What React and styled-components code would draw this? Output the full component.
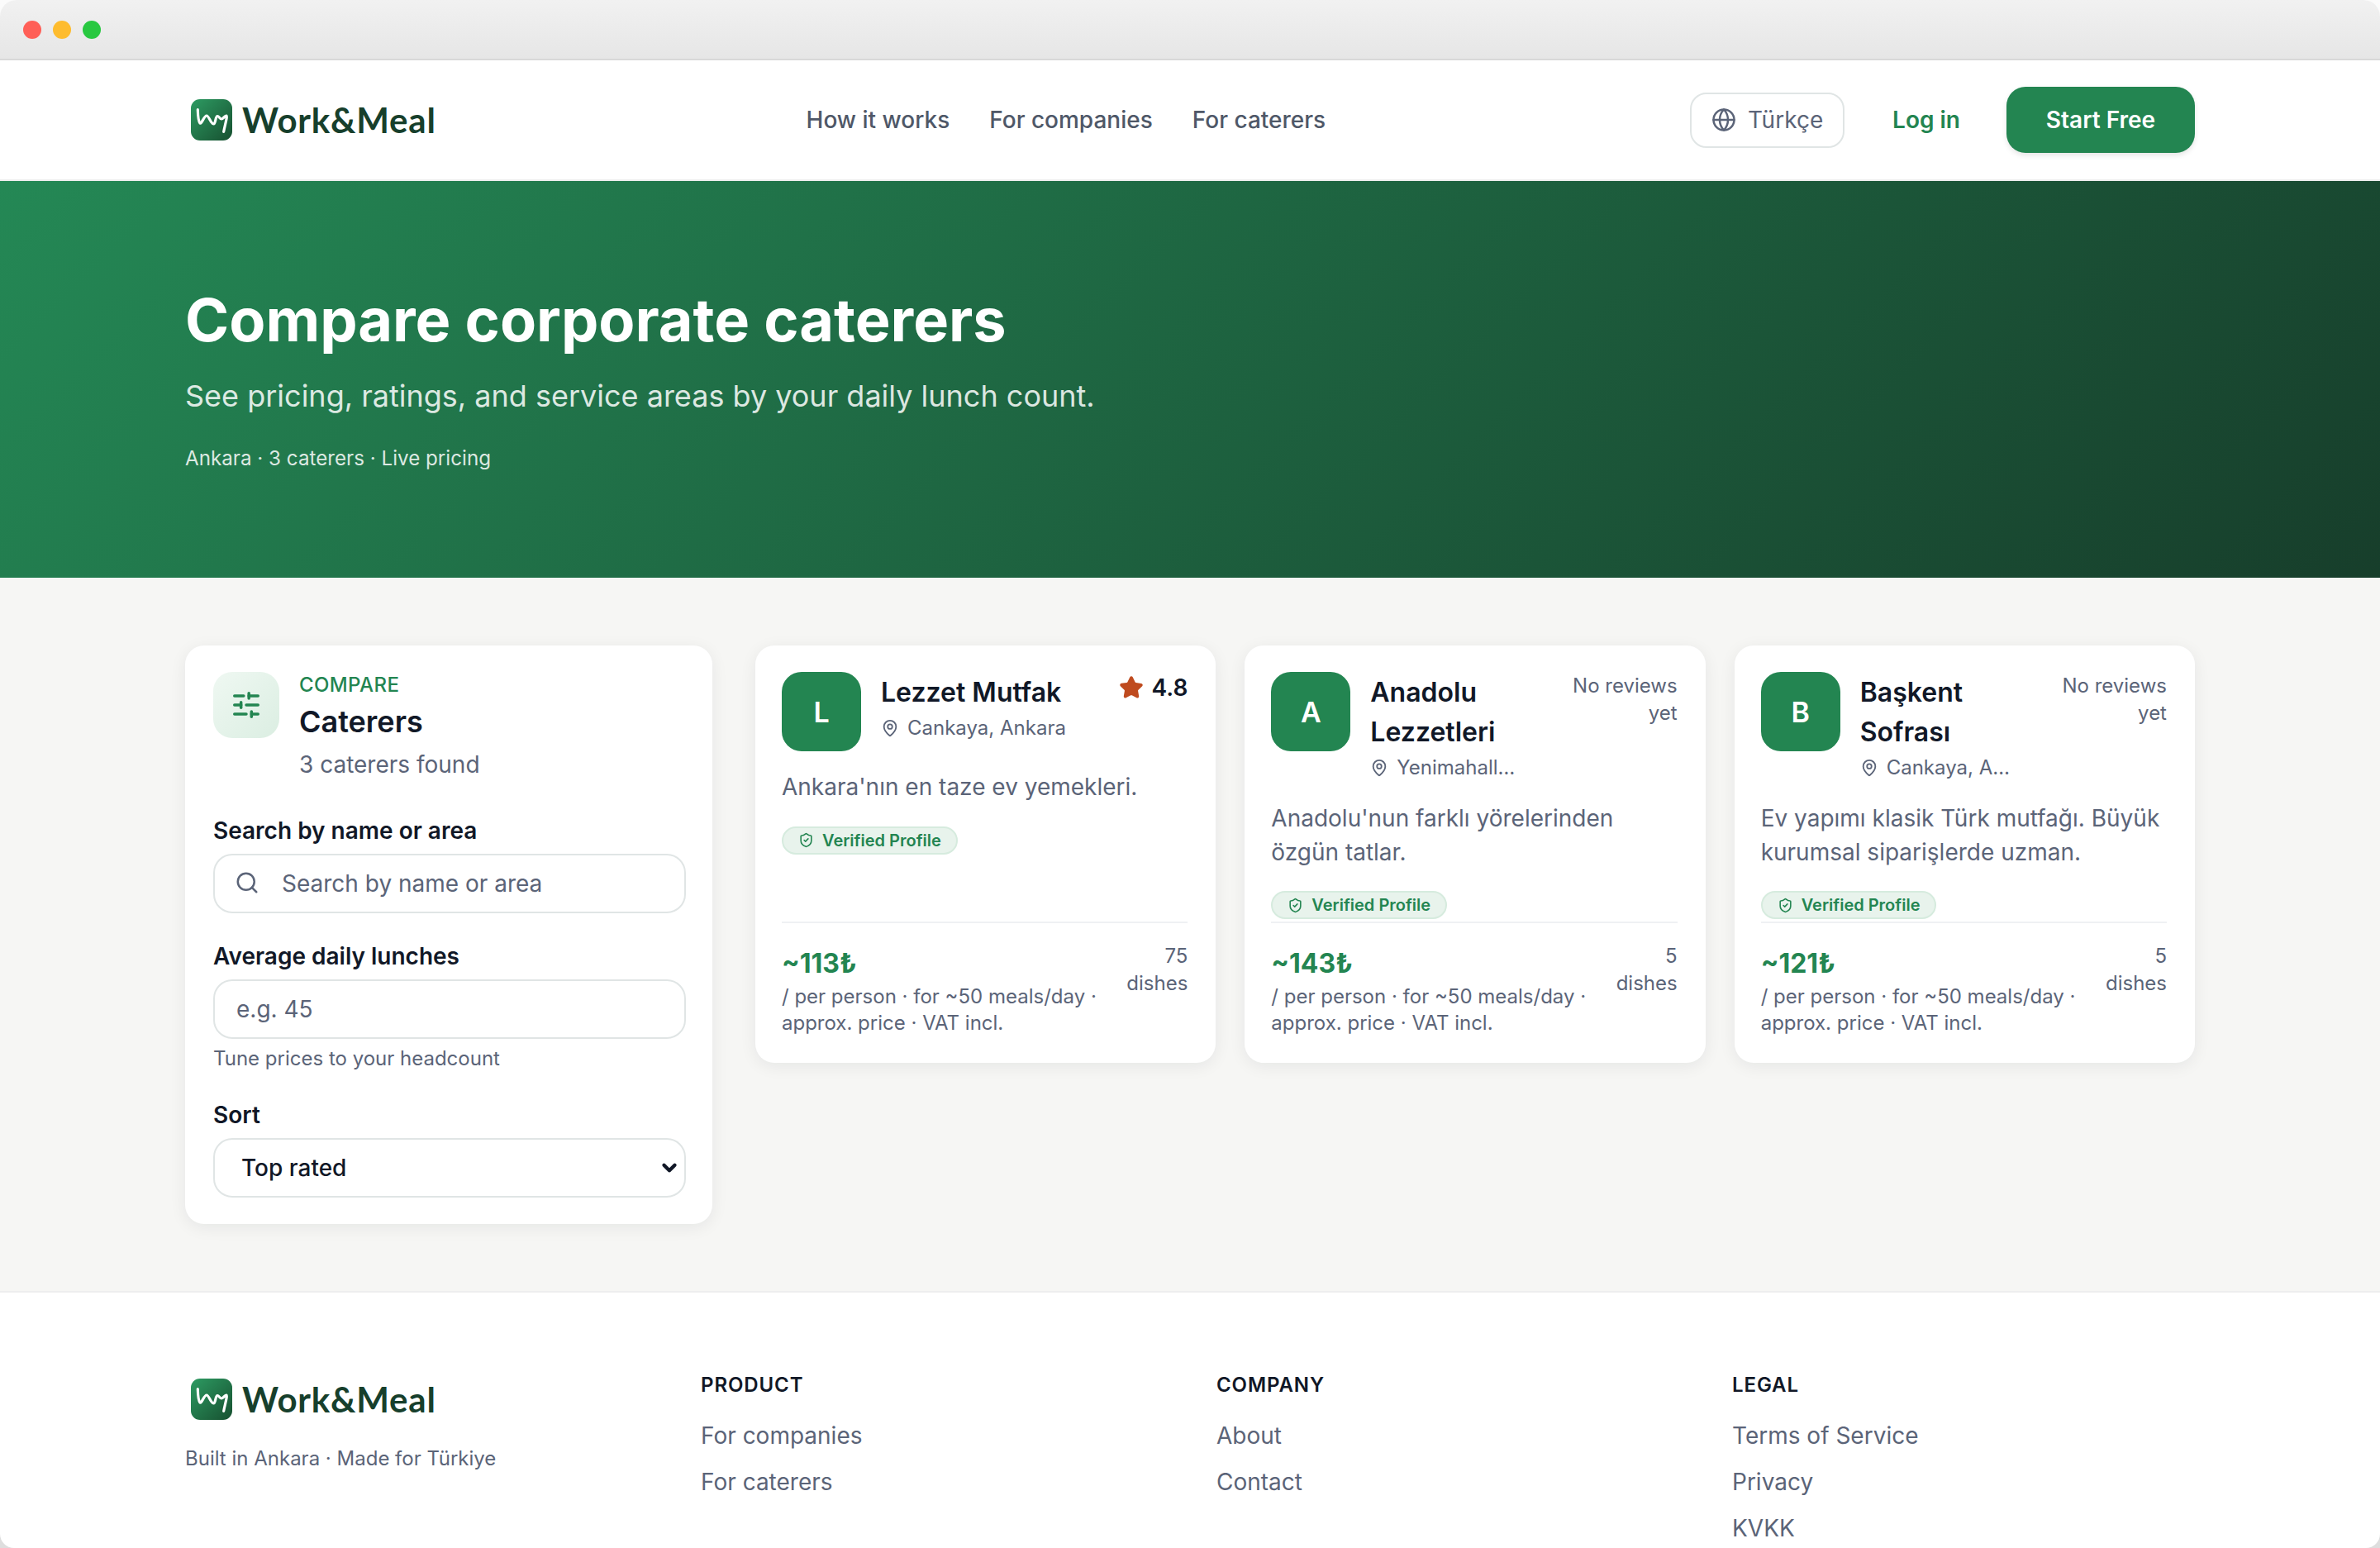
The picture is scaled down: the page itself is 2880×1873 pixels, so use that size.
import React from "react";
import styled, { createGlobalStyle } from "styled-components";
import { Globe, Search, SlidersHorizontal, MapPin, ShieldCheck, Star, ChevronDown } from "lucide-react";

const Global = createGlobalStyle`
  html, body { margin: 0; padding: 0; }
  html { background: linear-gradient(180deg, #fbfbfb, #dedede); }
  * { box-sizing: border-box; }
  body { font-family: Inter, "Liberation Sans", sans-serif; color: #111827; }
  a { text-decoration: none; color: inherit; }
`;

const Windowed = styled.div`
  width: 2880px;
  height: 1873px;
  overflow: hidden;
  background: #fff;
  border-radius: 20px 20px 17px 17px;
`;
const TitleBar = styled.div`
  height: 73px;
  display: flex;
  align-items: center;
  gap: 14px;
  padding-left: 28px;
  background: linear-gradient(180deg, #f1f1f1, #e6e6e6);
  border-bottom: 2px solid #d8d8d8;
`;
const Dot = styled.span`
  width: 22px;
  height: 22px;
  border-radius: 50%;
  background: ${(p) => p.$c};
`;
const Nav = styled.nav`
  height: 146px;
  padding: 0 224px;
  display: flex;
  justify-content: space-between;
  align-items: center;
  border-bottom: 2px solid #eeeeee;
`;
const LogoWrap = styled.a`
  display: flex;
  align-items: center;
  gap: 12px;
  padding-left: 7px;
`;
const LogoMark = styled.svg`
  width: 50px;
  height: 50px;
  flex: none;
`;
const LogoText = styled.span`
  font-family: Lato, sans-serif;
  font-weight: 700;
  font-size: 42px;
  line-height: 50px;
  letter-spacing: 0.8px;
  color: #173f2c;
`;
const NavLinks = styled.div`
  display: flex;
  gap: 48px;
  margin-left: 7px;
`;
const NavLink = styled.a`
  font-size: 28px;
  font-weight: 500;
  color: #4f5868;
`;
const NavRight = styled.div`
  display: flex;
  align-items: center;
`;
const LangButton = styled.button`
  width: 187px;
  height: 67px;
  display: flex;
  align-items: center;
  justify-content: center;
  gap: 14px;
  border: 2px solid #e0e5e5;
  border-radius: 20px;
  background: #fff;
  color: #5b6478;
  font: 400 28px Inter, sans-serif;
`;
const LoginLink = styled.a`
  margin-left: 58px;
  font-size: 28px;
  font-weight: 600;
  color: #238551;
`;
const StartButton = styled.a`
  margin-left: 56px;
  width: 228px;
  height: 80px;
  display: flex;
  align-items: center;
  justify-content: center;
  border-radius: 23px;
  background: #238551;
  color: #fff;
  font-size: 28px;
  font-weight: 600;
  box-shadow: 0 3px 6px rgba(0, 0, 0, 0.1);
`;
const Hero = styled.section`
  height: 480px;
  padding: 125px 224px 0;
  background: linear-gradient(135deg, #248855 0%, #173e2b 100%);
  color: #fff;
`;
const HeroTitle = styled.h1`
  margin: 0;
  font-size: 72px;
  line-height: 86px;
  font-weight: 700;
`;
const HeroSub = styled.p`
  margin: 25px 0 0;
  font-size: 36px;
  line-height: 48px;
  color: rgba(255, 255, 255, 0.85);
`;
const HeroMeta = styled.p`
  margin: 34px 0 0;
  font-size: 24.2px;
  line-height: 36px;
  color: rgba(255, 255, 255, 0.85);
`;
const Main = styled.main`
  height: 865px;
  padding: 82px 224px 0;
  background: #f6f6f4;
  border-bottom: 2px solid #eeeeee;
  display: grid;
  grid-template-columns: 638px 1fr;
  gap: 52px;
  align-items: start;
`;
const Sidebar = styled.aside`
  height: 700px;
  padding: 32px 32px 32px 34px;
  background: #fff;
  border-radius: 23px;
  box-shadow: 0 4px 20px rgba(16, 24, 40, 0.07);
`;
const SideHead = styled.div`
  display: flex;
  gap: 24px;
  margin-bottom: 36px;
`;
const IconBox = styled.div`
  width: 80px;
  height: 80px;
  flex: none;
  display: flex;
  align-items: center;
  justify-content: center;
  border-radius: 23px;
  color: #238551;
  background: linear-gradient(135deg, #eff8f2, #dbeee2);
`;
const Eyebrow = styled.div`
  font-size: 24px;
  line-height: 32px;
  font-weight: 500;
  letter-spacing: 0.4px;
  color: #238551;
`;
const SideTitle = styled.div`
  font-size: 36px;
  line-height: 56px;
  font-weight: 600;
  color: #111827;
`;
const SideCount = styled.div`
  font-size: 28px;
  line-height: 48px;
  color: #5b6478;
`;
const Field = styled.div`
  margin-bottom: ${(p) => p.$mb || 0}px;
`;
const Label = styled.label`
  display: block;
  font-size: 28px;
  line-height: 40px;
  font-weight: 600;
  color: #111827;
  margin-bottom: 8px;
`;
const InputWrap = styled.div`
  position: relative;
`;
const InputIcon = styled.span`
  position: absolute;
  left: 26px;
  top: 20px;
  display: flex;
  color: #5b6478;
`;
const TextInput = styled.input`
  width: 100%;
  height: 72px;
  padding: 0 26px 0 ${(p) => p.$pl || 26}px;
  border: 2px solid #e0e5e5;
  border-radius: 23px;
  outline: none;
  background: #fff;
  font: 400 28px Inter, sans-serif;
  color: #111827;
  &::placeholder { color: #5b6478; opacity: 1; }
`;
const Hint = styled.div`
  margin-top: 6px;
  font-size: 24px;
  line-height: 36px;
  color: #5b6478;
`;
const SelectBox = styled.select`
  width: 100%;
  height: 72px;
  padding: 0 32px;
  appearance: none;
  border: 2px solid #e0e5e5;
  border-radius: 23px;
  background: #fff;
  font: 500 28px Inter, sans-serif;
  color: #111827;
`;
const SelectArrow = styled.span`
  position: absolute;
  right: 7px;
  top: 23px;
  display: flex;
  color: #111827;
`;
const Cards = styled.div`
  display: grid;
  grid-template-columns: repeat(3, 1fr);
  gap: 35px;
  align-items: stretch;
`;
const Card = styled.article`
  height: 505px;
  padding: 32px 34px 32px 32px;
  background: #fff;
  border-radius: 23px;
  box-shadow: 0 4px 20px rgba(16, 24, 40, 0.07);
  display: flex;
  flex-direction: column;
  min-width: 0;
`;
const CardHead = styled.div`
  display: flex;
  gap: 24px;
  align-items: flex-start;
`;
const Avatar = styled.div`
  width: 96px;
  height: 96px;
  flex: none;
  display: flex;
  align-items: center;
  justify-content: center;
  border-radius: 24px;
  background: #238551;
  color: #fff;
  font-size: 34px;
  font-weight: 600;
`;
const CardInfo = styled.div`
  flex: 1;
  min-width: 0;
`;
const CardName = styled.div`
  font-size: 32px;
  line-height: 48px;
  font-weight: 600;
  color: #111827;
  margin-top: 1px;
`;
const CardLoc = styled.div`
  display: flex;
  align-items: center;
  gap: 10px;
  margin-top: 1px;
  font-size: 24px;
  line-height: 36px;
  color: #5b6478;
`;
const LocText = styled.span`
  min-width: 0;
  overflow: hidden;
  white-space: nowrap;
  text-overflow: ellipsis;
`;
const Rating = styled.div`
  flex: none;
  display: flex;
  align-items: center;
  gap: 10px;
  font-size: 28px;
  line-height: 38px;
  font-weight: 600;
  color: #111827;
`;
const NoReviews = styled.div`
  flex: none;
  width: 162px;
  text-align: right;
  font-size: 24px;
  line-height: 33px;
  color: #5b6478;
`;
const Desc = styled.p`
  margin: 23px 0 0;
  font-size: 28px;
  line-height: 40.5px;
  color: #5b6478;
`;
const Badge = styled.span`
  align-self: flex-start;
  margin-top: 27px;
  height: 34px;
  padding: 0 18px;
  display: inline-flex;
  align-items: center;
  gap: 10px;
  border: 2px solid #d6ebde;
  border-radius: 17px;
  background: #e8f3ec;
  color: #238551;
  font-size: 20px;
  font-weight: 600;
`;
const CardFoot = styled.div`
  margin-top: auto;
  padding-top: 24px;
  border-top: 2px solid #eff1f3;
  display: flex;
  justify-content: space-between;
  gap: 20px;
`;
const Price = styled.div`
  font-size: 32px;
  line-height: 49px;
  font-weight: 700;
  color: #238551;
`;
const PriceNote = styled.div`
  font-size: 24px;
  line-height: 32px;
  color: #5b6478;
`;
const Dishes = styled.div`
  flex: none;
  width: 80px;
  text-align: right;
  font-size: 24px;
  line-height: 32.5px;
  color: #5b6478;
`;
const Footer = styled.footer`
  padding: 96px 224px 0;
  display: grid;
  grid-template-columns: repeat(4, 1fr);
  gap: 64px;
`;
const FooterBrand = styled.div`
  padding-top: 8px;
`;
const Tagline = styled.p`
  margin: 29px 0 0;
  font-size: 24px;
  line-height: 36px;
  color: #5b6478;
`;
const ColHead = styled.h4`
  margin: 0 0 17px;
  font-size: 24px;
  line-height: 32px;
  font-weight: 600;
  letter-spacing: 0.9px;
  color: #111827;
`;
const ColLink = styled.a`
  display: block;
  font-size: 28px;
  line-height: 56px;
  color: #5b6478;
`;

function Logo() {
  return (
    <LogoWrap>
      <LogoMark viewBox="0 0 50 50">
        <defs>
          <linearGradient id="lg" x1="0" y1="0" x2="1" y2="1">
            <stop offset="0" stopColor="#2d9b62" />
            <stop offset="1" stopColor="#175030" />
          </linearGradient>
        </defs>
        <rect width="50" height="50" rx="11" fill="url(#lg)" />
        <path
          d="M8.300 12.700C8.500 20 9 27 11 29C13 30.500 16 20 19 20C22 20 24 30 27.500 30C30 30 29.500 21 32 20.500C34 20.500 35 24 37 24C39 24 41 20 43 20C44.500 20.500 41 32 39.700 39.300"
          fill="none"
          stroke="#fff"
          strokeWidth="3.200"
          strokeLinecap="round"
          strokeLinejoin="round"
        />
      </LogoMark>
      <LogoText>Work&amp;Meal</LogoText>
    </LogoWrap>
  );
}

const caterers = [
  { l: "L", n: "Lezzet Mutfak", loc: "Cankaya, Ankara", d: "Ankara'nın en taze ev yemekleri.", p: "~113₺", k: "75", r: "4.8" },
  { l: "A", n: "Anadolu Lezzetleri", loc: "Yenimahalle, Ankara", d: "Anadolu'nun farklı yörelerinden özgün tatlar.", p: "~143₺", k: "5" },
  { l: "B", n: "Başkent Sofrası", loc: "Cankaya, Ankara", d: "Ev yapımı klasik Türk mutfağı. Büyük kurumsal siparişlerde uzman.", p: "~121₺", k: "5" },
];

function CatererCard({ c }) {
  return (
    <Card>
      <CardHead>
        <Avatar>{c.l}</Avatar>
        <CardInfo>
          <CardName>{c.n}</CardName>
          <CardLoc>
            <MapPin size={22} strokeWidth={2} style={{ flex: "none" }} />
            <LocText>{c.loc}</LocText>
          </CardLoc>
        </CardInfo>
        {c.r ? (
          <Rating>
            <Star size={30} fill="#bf4b1f" color="#bf4b1f" />
            {c.r}
          </Rating>
        ) : (
          <NoReviews>No reviews yet</NoReviews>
        )}
      </CardHead>
      <Desc>{c.d}</Desc>
      <Badge>
        <ShieldCheck size={19} strokeWidth={2} />
        Verified Profile
      </Badge>
      <CardFoot>
        <div>
          <Price>{c.p}</Price>
          <PriceNote>/ per person · for ~50 meals/day · approx. price · VAT incl.</PriceNote>
        </div>
        <Dishes>
          {c.k}
          <br />
          dishes
        </Dishes>
      </CardFoot>
    </Card>
  );
}

export default function App() {
  return (
    <>
      <Global />
      <Windowed>
        <TitleBar>
          <Dot $c="#ff5f57" />
          <Dot $c="#febc2e" />
          <Dot $c="#28c840" />
        </TitleBar>
        <Nav>
          <Logo />
          <NavLinks>
            <NavLink>How it works</NavLink>
            <NavLink>For companies</NavLink>
            <NavLink>For caterers</NavLink>
          </NavLinks>
          <NavRight>
            <LangButton>
              <Globe size={30} strokeWidth={2} />
              Türkçe
            </LangButton>
            <LoginLink>Log in</LoginLink>
            <StartButton>Start Free</StartButton>
          </NavRight>
        </Nav>
        <Hero>
          <HeroTitle>Compare corporate caterers</HeroTitle>
          <HeroSub>See pricing, ratings, and service areas by your daily lunch count.</HeroSub>
          <HeroMeta>Ankara · 3 caterers · Live pricing</HeroMeta>
        </Hero>
        <Main>
          <Sidebar>
            <SideHead>
              <IconBox>
                <SlidersHorizontal size={38} strokeWidth={2.2} />
              </IconBox>
              <div>
                <Eyebrow>COMPARE</Eyebrow>
                <SideTitle>Caterers</SideTitle>
                <SideCount>3 caterers found</SideCount>
              </div>
            </SideHead>
            <Field $mb={32}>
              <Label>Search by name or area</Label>
              <InputWrap>
                <InputIcon>
                  <Search size={30} strokeWidth={2} />
                </InputIcon>
                <TextInput $pl={81} placeholder="Search by name or area" />
              </InputWrap>
            </Field>
            <Field $mb={30}>
              <Label>Average daily lunches</Label>
              <TextInput placeholder="e.g. 45" />
              <Hint>Tune prices to your headcount</Hint>
            </Field>
            <Field>
              <Label>Sort</Label>
              <InputWrap>
                <SelectBox defaultValue="top">
                  <option value="top">Top rated</option>
                </SelectBox>
                <SelectArrow>
                  <ChevronDown size={26} strokeWidth={4} />
                </SelectArrow>
              </InputWrap>
            </Field>
          </Sidebar>
          <Cards>
            {caterers.map((c) => (
              <CatererCard key={c.l} c={c} />
            ))}
          </Cards>
        </Main>
        <Footer>
          <FooterBrand>
            <Logo />
            <Tagline>Built in Ankara · Made for Türkiye</Tagline>
          </FooterBrand>
          <div>
            <ColHead>PRODUCT</ColHead>
            <ColLink>For companies</ColLink>
            <ColLink>For caterers</ColLink>
          </div>
          <div>
            <ColHead>COMPANY</ColHead>
            <ColLink>About</ColLink>
            <ColLink>Contact</ColLink>
          </div>
          <div>
            <ColHead>LEGAL</ColHead>
            <ColLink>Terms of Service</ColLink>
            <ColLink>Privacy</ColLink>
            <ColLink>KVKK</ColLink>
          </div>
        </Footer>
      </Windowed>
    </>
  );
}
